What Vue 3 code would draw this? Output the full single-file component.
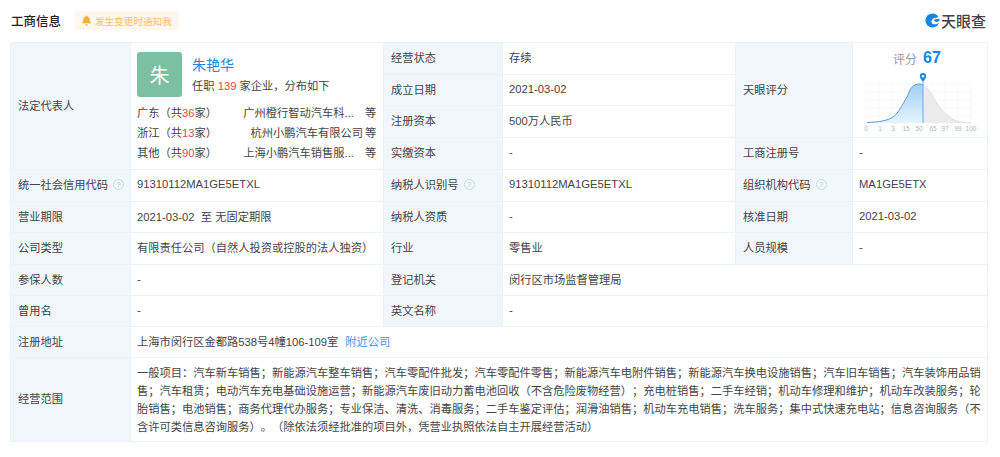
<script setup>
const regions = [
  { name: '广东', n: 36, co: '广州橙行智动汽车科...', cut: true },
  { name: '浙江', n: 13, co: '杭州小鹏汽车有限公司', cut: false },
  { name: '其他', n: 90, co: '上海小鹏汽车销售服...', cut: true }
]
const scope = [
  '一般项目：汽车新车销售；新能源汽车整车销售；汽车零配件批发；汽车零配件零售；新能源汽车电附件销售；新能源汽车换电设施销售；汽车旧车销售；汽车装饰用品销',
  '售；汽车租赁；电动汽车充电基础设施运营；新能源汽车废旧动力蓄电池回收（不含危险废物经营）；充电桩销售；二手车经销；机动车修理和维护；机动车改装服务；轮',
  '胎销售；电池销售；商务代理代办服务；专业保洁、清洗、消毒服务；二手车鉴定评估；润滑油销售；机动车充电销售；洗车服务；集中式快速充电站；信息咨询服务（不',
  '含许可类信息咨询服务）。（除依法须经批准的项目外，凭营业执照依法自主开展经营活动）'
]
const ticks = [['0',866],['1',880],['3',893],['15',906],['50',919],['65',933],['97',945],['99',958],['100',971]]
const gridX = [866,879,892,905,918,932,945,958,971]
const gridY = [84,92,100,108,116,123]
</script>

<template>
  <div class="page">
    <header class="head">
      <h2 class="title">工商信息</h2>
      <div class="notify">
        <svg class="bell" viewBox="0 0 10 12" width="9" height="11"><path d="M5 0.5a1 1 0 0 1 1 1c1.8.5 2.5 1.9 2.5 3.5 0 1.800.6 2.600 1.200 3.300v.7H.3v-.7C.9 7.600 1.500 6.800 1.500 5c0-1.600.7-3 2.500-3.500a1 1 0 0 1 1-1zM3.600 10.300h2.800a1.400 1.400 0 0 1-2.800 0z" fill="#f9ab3c"/></svg>
        <span>发生变更时通知我</span>
      </div>
      <div class="logo">
        <svg viewBox="0 0 16 16" width="15" height="15">
          <circle cx="8" cy="8" r="7.500" fill="#1784e6"/>
          <path d="M16 3.500C13.500 5.500 11 5 9.500 5.500 7.500 6.200 6.300 8 7 10c.6 1.700 2.800 2.500 4.800 1.900 1.300-.4 3-1.300 4.200-2.400V8c-1 .8-2.600 1.500-4 1.500-1.500 0-2.300-.8-2.200-1.700.1-1 1.200-1.600 2.400-1.500 1.500.1 2.800 0 3.800-.6z" fill="#fff"/>
        </svg>
        <span>天眼查</span>
      </div>
    </header>

    <section class="table">
      <div class="label legal">法定代表人</div>
      <div class="cell person">
        <div class="who">
          <div class="avatar">朱</div>
          <div class="who-text">
            <div class="name">朱艳华</div>
            <div class="sub">任职 <em>139</em> 家企业，分布如下</div>
          </div>
        </div>
        <div class="region" v-for="r in regions" :key="r.name">
          <span>{{ r.name }}（共<em>{{ r.n }}</em>家）</span>
          <span class="co" :class="{ cut: r.cut }"><span>{{ r.co }}</span><span class="deng">等</span></span>
        </div>
      </div>

      <div class="label">经营状态</div><div class="cell">存续</div>
      <div class="label score-label">天眼评分</div>
      <div class="cell score">
        <div class="score-top"><span>评分</span><b>67</b></div>
        <svg class="chart" viewBox="860 70 118 62" width="118" height="62">
          <line v-for="x in gridX" :key="'x'+x" :x1="x" :x2="x" y1="84" y2="123" stroke="#f3f3f3" stroke-width="0.7"/>
          <line v-for="y in gridY" :key="'y'+y" x1="866" x2="971" :y1="y" :y2="y" stroke="#f3f3f3" stroke-width="0.7"/>
          <defs>
            <linearGradient id="blueFill" x1="0" y1="0" x2="0" y2="1">
              <stop offset="0" stop-color="#9fd0f5"/>
              <stop offset="1" stop-color="#e6f4fd"/>
            </linearGradient>
          </defs>
          <path d="M923 85C927 87 930 92 933 97C937 104 942 111 947 115C951 118.500 955 121 960 122C964 122.700 968 122.800 971 122.800V123H923Z" fill="#eceaea"/>
          <path d="M923 85C927 87 930 92 933 97C937 104 942 111 947 115C951 118.500 955 121 960 122C964 122.700 968 122.800 971 122.800" fill="none" stroke="#e0dddd" stroke-width="1"/>
          <path d="M867 122.500C880 122 888 120.500 893 117C899 113 903 103 907 97C909 92 911 86 916 84.500C919 83.700 921 84 923 85V123H867Z" fill="url(#blueFill)"/>
          <path d="M867 122.500C880 122 888 120.500 893 117C899 113 903 103 907 97C909 92 911 86 916 84.500C919 83.700 921 84 923 85" fill="none" stroke="#5b9bd8" stroke-width="1"/>
          <line x1="923" x2="923" y1="80" y2="123" stroke="#6ea8e6" stroke-width="1"/>
          <path d="M923 81.500C921 79.500 919.800 78 919.800 76.200a3.200 3.200 0 0 1 6.400 0C926.200 78 925 79.500 923 81.500z" fill="#1784e6"/>
          <circle cx="923" cy="76.200" r="1.200" fill="#fff"/>
          <text v-for="t in ticks" :key="t[0]" :x="t[1]" y="130.500" text-anchor="middle" class="tick">{{ t[0] }}</text>
        </svg>
      </div>

      <div class="label">成立日期</div><div class="cell">2021-03-02</div>
      <div class="label">注册资本</div><div class="cell">500万人民币</div>
      <div class="label">实缴资本</div><div class="cell">-</div>
      <div class="label">工商注册号</div><div class="cell">-</div>

      <div class="label">统一社会信用代码<i class="help">?</i></div><div class="cell">91310112MA1GE5ETXL</div>
      <div class="label">纳税人识别号<i class="help">?</i></div><div class="cell">91310112MA1GE5ETXL</div>
      <div class="label">组织机构代码<i class="help">?</i></div><div class="cell">MA1GE5ETX</div>

      <div class="label">营业期限</div><div class="cell">2021-03-02&nbsp; 至 无固定期限</div>
      <div class="label">纳税人资质</div><div class="cell">-</div>
      <div class="label">核准日期</div><div class="cell">2021-03-02</div>

      <div class="label">公司类型</div><div class="cell">有限责任公司（自然人投资或控股的法人独资）</div>
      <div class="label">行业</div><div class="cell">零售业</div>
      <div class="label">人员规模</div><div class="cell">-</div>

      <div class="label">参保人数</div><div class="cell">-</div>
      <div class="label">登记机关</div><div class="cell span3">闵行区市场监督管理局</div>

      <div class="label">曾用名</div><div class="cell">-</div>
      <div class="label">英文名称</div><div class="cell span3">-</div>

      <div class="label">注册地址</div>
      <div class="cell span5">上海市闵行区金都路538号4幢106-109室<a class="near">附近公司</a></div>

      <div class="label">经营范围</div>
      <div class="cell span5 scope">
        <div v-for="(l, i) in scope" :key="i">{{ l }}</div>
      </div>
    </section>
  </div>
</template>

<style scoped>
.page {
  width: 1000px;
  height: 457px;
  background: #fff;
  font-family: "Liberation Sans", "Noto Sans CJK SC", sans-serif;
  font-size: 11.25px;
  color: #444;
  overflow: hidden;
  box-sizing: border-box;
  padding: 0 12px 0 10px;
  text-spacing-trim: space-all;
}
.head {
  height: 42px;
  display: flex;
  align-items: center;
  padding-bottom: 1px;
  box-sizing: border-box;
}
.title {
  margin: 0 14px 0 1px;
  font-size: 12.5px;
  font-weight: 500;
  color: #222;
}
.notify {
  height: 19px;
  width: 104px;
  box-sizing: border-box;
  padding-left: 7px;
  display: flex;
  align-items: center;
  gap: 4px;
  background: #fff6ec;
  border-radius: 2px;
  color: #f8bd78;
  font-size: 9.6px;
}
.logo {
  margin-left: auto;
  margin-right: 2px;
  display: flex;
  align-items: center;
  gap: 1px;
  font-size: 15px;
  font-weight: 500;
  color: #444;
}
.table {
  display: grid;
  grid-template-columns: 119px 252px 118px 232px 116px 134px;
  grid-template-rows: 31px 30px 31px 31px 31px 30px 31px 30px 30px 30px 83px;
  gap: 1px;
  padding: 1px;
  background: #edf2f8;
}
.label, .cell {
  display: flex;
  align-items: center;
  white-space: nowrap;
  box-sizing: border-box;
  padding-bottom: 3px;
}
.label {
  background: #f0f6fc;
  padding-left: 7px;
  color: #444;
}
.cell {
  background: #fff;
  padding-left: 6px;
  color: #444;
}
.legal { grid-row: 1 / 5; grid-column: 1; }
.person {
  grid-row: 1 / 5;
  grid-column: 2;
  display: block;
  padding: 9px 7px 0 6px;
}
.who { display: flex; gap: 10px; height: 45px; margin-bottom: 6px; }
.avatar {
  width: 45px;
  height: 45px;
  border-radius: 3px;
  background: #7cbfa3;
  color: #fff;
  font-size: 20px;
  display: flex;
  align-items: center;
  justify-content: center;
}
.name { font-size: 14px; color: #1c85e6; line-height: 20px; margin-top: 3px; }
.sub { line-height: 18px; margin-top: 2px; }
em { font-style: normal; color: #ec4646; }
.region { display: flex; justify-content: space-between; height: 20px; line-height: 20px; }
.co { display: flex; justify-content: flex-end; gap: 2px; }
.co.cut { gap: 11px; }
.deng { width: 11px; }
.score-label { grid-row: 1 / 4; grid-column: 5; }
.score {
  grid-row: 1 / 4;
  grid-column: 6;
  position: relative;
  display: block;
  padding: 0;
}
.score-top {
  position: absolute;
  left: 40px;
  top: 6px;
  display: flex;
  align-items: center;
  gap: 6px;
  font-size: 12px;
  color: #999;
}
.score-top b { font-size: 16px; color: #1784e6; }
.chart { position: absolute; left: 7px; top: 27px; }
.tick { font-size: 6.5px; fill: #a8b6c6; font-family: "Liberation Sans", sans-serif; }
.help {
  display: inline-block;
  width: 9px;
  height: 9px;
  margin-left: 5px;
  border: 1px solid #c3dcea;
  border-radius: 50%;
  color: #a9cadd;
  font-size: 7px;
  font-style: normal;
  line-height: 9px;
  text-align: center;
}
.span3 { grid-column: span 3; }
.span5 { grid-column: span 5; }
.near { color: #3a96ea; margin-left: 7px; }
.scope {
  display: block;
  padding-top: 6px;
  line-height: 18px;
}
</style>
